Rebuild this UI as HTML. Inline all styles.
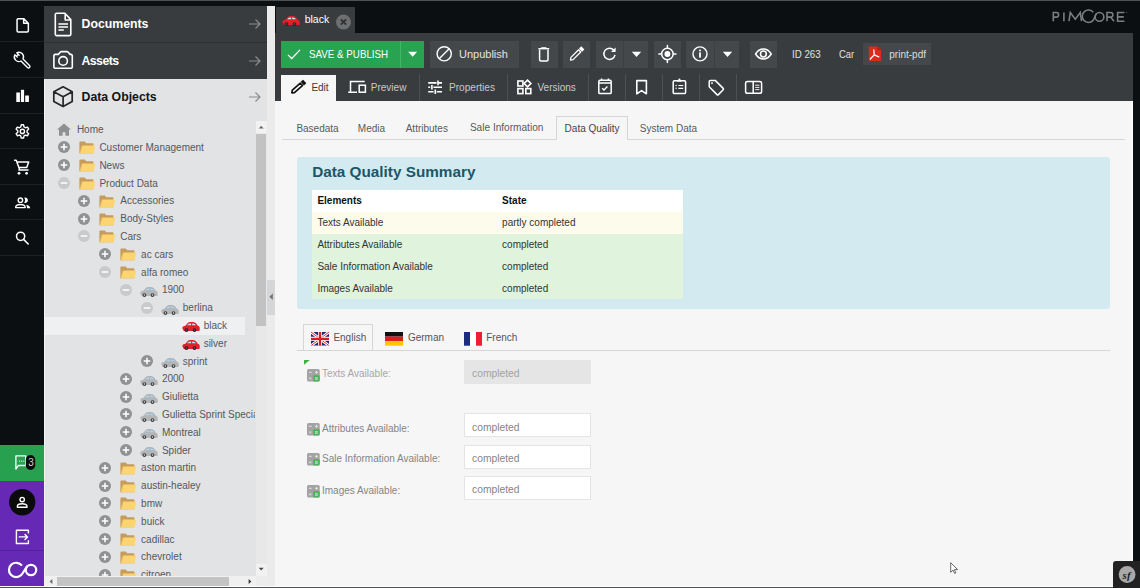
<!DOCTYPE html>
<html><head><meta charset="utf-8">
<style>
*{margin:0;padding:0;box-sizing:border-box}
html,body{width:1140px;height:588px;overflow:hidden;background:#0c0f12;font-family:"Liberation Sans",sans-serif;position:relative}
.a{position:absolute}
.t{position:absolute;white-space:nowrap;line-height:1}
svg{position:absolute;overflow:visible}
</style></head><body>
<div class="a" style="left:0px;top:0px;width:1140px;height:1px;background:#4f5154;"></div>
<div class="a" style="left:0px;top:41px;width:44px;height:1px;background:#1d2024;"></div>
<div class="a" style="left:0px;top:77px;width:44px;height:1px;background:#1d2024;"></div>
<div class="a" style="left:0px;top:113px;width:44px;height:1px;background:#1d2024;"></div>
<div class="a" style="left:0px;top:148px;width:44px;height:1px;background:#1d2024;"></div>
<div class="a" style="left:0px;top:184px;width:44px;height:1px;background:#1d2024;"></div>
<div class="a" style="left:0px;top:219px;width:44px;height:1px;background:#1d2024;"></div>
<div class="a" style="left:0px;top:255px;width:44px;height:1px;background:#1d2024;"></div>
<div class="a" style="left:0px;top:445px;width:44px;height:36px;background:#27a04f;"></div>
<div class="a" style="left:0px;top:481px;width:44px;height:107px;background:#6529b6;"></div>
<div class="a" style="left:0px;top:550px;width:44px;height:1px;background:#5422a0;"></div>
<svg style="left:0px;top:0px;" width="44" height="40" viewBox="0 0 44 40"><path d="M17.05 19.85 a1.2 1.2 0 0 1 1.2-1.2 h5.4 l4.7 4.6 v7.5 a1.2 1.2 0 0 1-1.2 1.2 h-8.9 a1.2 1.2 0 0 1-1.2-1.2z M23.65 18.65 v4.6 h4.7" fill="none" stroke="#fff" stroke-width="1.5" stroke-linejoin="round"/></svg>
<svg style="left:0px;top:40px;" width="44" height="36" viewBox="0 0 44 36"><g transform="translate(18.9 16.9) rotate(45)"><path d="M4.37 -1.45 L13.55 -1.45 A1.45 1.45 0 0 1 13.55 1.45 L4.37 1.45 A4.6 4.6 0 0 1 -4.40 1.35 L-1.0 1.35 A1.35 1.35 0 0 1 -1.0 -1.35 L-4.40 -1.35 A4.6 4.6 0 0 1 4.37 -1.45 Z" fill="none" stroke="#fff" stroke-width="1.35" stroke-linejoin="round"/></g></svg>
<svg style="left:0px;top:76px;" width="44" height="36" viewBox="0 0 44 36"><rect x="16.3" y="16.5" width="3.6" height="9.5" fill="#fff"/><rect x="20.9" y="13.8" width="3.2" height="12.2" fill="#fff"/><rect x="25.2" y="19.5" width="3.7" height="6.5" fill="#fff"/></svg>
<svg style="left:0px;top:119px;" width="44" height="24" viewBox="0 0 44 24"><path d="M20.72 8.01 L21.24 5.80 L23.56 5.80 L24.08 8.01 L25.36 8.75 L27.53 8.09 L28.70 10.11 L27.04 11.66 L27.04 13.14 L28.70 14.69 L27.53 16.71 L25.36 16.05 L24.08 16.79 L23.56 19.00 L21.24 19.00 L20.72 16.79 L19.44 16.05 L17.27 16.71 L16.10 14.69 L17.76 13.14 L17.76 11.66 L16.10 10.11 L17.27 8.09 L19.44 8.75Z" fill="none" stroke="#fff" stroke-width="1.4" stroke-linejoin="round"/><circle cx="22.4" cy="12.4" r="2.1" fill="none" stroke="#fff" stroke-width="1.4"/></svg>
<svg style="left:0px;top:155px;" width="44" height="24" viewBox="0 0 44 24"><path d="M14.6 5.3 h1.6 l3.6 9.6 h8.2 M17.2 7 h11.5 l-2 5.5 h-7.6 M19.8 14.9 l-1 0 v-0 " fill="none" stroke="#fff" stroke-width="1.5" stroke-linejoin="round" stroke-linecap="round"/><circle cx="19" cy="18.3" r="1.4" fill="#fff"/><circle cx="26.6" cy="18.3" r="1.4" fill="#fff"/></svg>
<svg style="left:0px;top:190px;" width="44" height="24" viewBox="0 0 44 24"><circle cx="20.4" cy="10.2" r="2.2" fill="none" stroke="#fff" stroke-width="1.4"/><path d="M15.6 17.6 c0-2.1 2.2-3.1 4.8-3.1 s4.8 1 4.8 3.1z" fill="none" stroke="#fff" stroke-width="1.4" stroke-linejoin="round"/><path d="M24.2 7.8 a2.7 2.7 0 1 1 0 5 c0.6-0.7 0.9-1.5 0.9-2.5 s-0.3-1.8-0.9-2.5z" fill="#fff"/><path d="M26.2 14.8 c2.3 0.3 4 1.6 4 3.4 h-3.2 c0-1.3-0.3-2.4-0.8-3.4z" fill="#fff"/></svg>
<svg style="left:0px;top:226px;" width="44" height="24" viewBox="0 0 44 24"><circle cx="20.6" cy="10.3" r="4.1" fill="none" stroke="#fff" stroke-width="1.5"/><path d="M23.6 13.4 l4.6 4.6" stroke="#fff" stroke-width="1.6" stroke-linecap="round"/></svg>
<svg style="left:0px;top:445px;" width="44" height="36" viewBox="0 0 44 36"><path d="M15.9 10.9 h9.8 v9.6 h-7.4 l-2.4 3.6z" fill="none" stroke="#fff" stroke-width="1.3" stroke-linejoin="round"/><circle cx="19.6" cy="16.1" r="0.65" fill="#fff"/><circle cx="21.7" cy="16.1" r="0.65" fill="#fff"/><circle cx="23.8" cy="16.1" r="0.65" fill="#fff"/><rect x="25.8" y="10" width="9.4" height="15" rx="4.7" fill="#0b0b0b"/></svg>
<div class="t" style="left:28.3px;top:457.94px;font-size:10px;color:#d0d0d0;">3</div>
<svg style="left:0px;top:481px;" width="44" height="36" viewBox="0 0 44 36"><circle cx="22.2" cy="21.2" r="13.2" fill="#0b0b0b"/><circle cx="22.2" cy="18.6" r="2.2" fill="none" stroke="#fff" stroke-width="1.4"/><path d="M17.4 26.3 v-1 a4.8 2.6 0 0 1 9.6 0 v1z" fill="none" stroke="#fff" stroke-width="1.4" stroke-linejoin="round"/></svg>
<svg style="left:0px;top:520px;" width="44" height="30" viewBox="0 0 44 30"><path d="M28.4 13.5 v-3.2 h-12 v13.2 h12 v-3.2" fill="none" stroke="#fff" stroke-width="1.4" stroke-linejoin="round"/><path d="M19.2 16.9 h8.2 M25 14.4 l2.5 2.5 l-2.5 2.5" fill="none" stroke="#fff" stroke-width="1.4" stroke-linejoin="round" stroke-linecap="round"/></svg>
<svg style="left:0px;top:551px;" width="44" height="37" viewBox="0 0 44 37"><g fill="none" stroke="#fff" stroke-width="2.2"><path d="M21.9 14.6 A7.2 7.2 0 1 0 21.3 24 C23 22.2 25.6 17 27.3 15.3"/><circle cx="31" cy="19" r="5.2"/></g></svg>
<div class="a" style="left:44px;top:6px;width:223px;height:582px;background:#e2e3e5;"></div>
<div class="a" style="left:44px;top:6px;width:223px;height:35.5px;background:#393c3f;"></div>
<div class="a" style="left:44px;top:41.5px;width:223px;height:1px;background:#2e3134;"></div>
<div class="a" style="left:44px;top:42.5px;width:223px;height:36.3px;background:#393c3f;"></div>
<div class="a" style="left:44px;top:79px;width:1px;height:509px;background:#f3f3f3;"></div>
<div class="t" style="left:81.5px;top:17.99px;font-size:12.3px;color:#fff;font-weight:bold;">Documents</div>
<div class="t" style="left:81.5px;top:55.19px;font-size:12.3px;color:#fff;font-weight:bold;letter-spacing:-0.55px">Assets</div>
<div class="t" style="left:81.5px;top:90.69px;font-size:12.3px;color:#141414;font-weight:bold;">Data Objects</div>
<svg style="left:44px;top:6px;" width="30" height="36" viewBox="0 0 30 36"><path d="M11.3 8.6 a1.4 1.4 0 0 1 1.4-1.4 h8.2 l5.9 6.4 v14.6 a1.4 1.4 0 0 1-1.4 1.4 h-12.7 a1.4 1.4 0 0 1-1.4-1.4z M21.2 7.6 v6.4 h5.6" fill="none" stroke="#fff" stroke-width="1.6" stroke-linejoin="round"/><path d="M14.4 18 h9.6 M14.4 21 h9.6 M14.4 24 h5.4" stroke="#fff" stroke-width="1.6"/></svg>
<svg style="left:44px;top:42px;" width="30" height="36" viewBox="0 0 30 36"><path d="M11.3 12.4 h3 l2.1-2.4 c0.3-0.3 0.6-0.4 1-0.4 h5.6 c0.4 0 0.7 0.1 1 0.4 l2.1 2.4 h0.8 a1.4 1.4 0 0 1 1.4 1.4 v11.1 a1.4 1.4 0 0 1-1.4 1.4 h-15.6 a1.4 1.4 0 0 1-1.4-1.4 v-11.1 a1.4 1.4 0 0 1 1.4-1.4z" fill="none" stroke="#fff" stroke-width="1.6" stroke-linejoin="round"/><circle cx="19.1" cy="18.9" r="4.3" fill="none" stroke="#fff" stroke-width="1.6"/></svg>
<svg style="left:44px;top:79px;" width="30" height="36" viewBox="0 0 30 36"><path d="M19.1 7.8 l9.1 4.9 v9.9 l-9.1 5 l-9.3-5 v-9.9z M9.8 12.7 l9.3 5 l9.1-5 M19.1 17.7 v10" fill="none" stroke="#262626" stroke-width="1.7" stroke-linejoin="round"/></svg>
<svg style="left:244px;top:18px;" width="20" height="12" viewBox="0 0 20 12"><path d="M5 6 h11 M11.5 1.5 l4.5 4.5 l-4.5 4.5" fill="none" stroke="#8a8c8e" stroke-width="1.2"/></svg>
<svg style="left:244px;top:54.5px;" width="20" height="12" viewBox="0 0 20 12"><path d="M5 6 h11 M11.5 1.5 l4.5 4.5 l-4.5 4.5" fill="none" stroke="#8a8c8e" stroke-width="1.2"/></svg>
<svg style="left:244px;top:91px;" width="20" height="12" viewBox="0 0 20 12"><path d="M5 6 h11 M11.5 1.5 l4.5 4.5 l-4.5 4.5" fill="none" stroke="#8a8c8e" stroke-width="1.2"/></svg>
<div class="a" style="left:45px;top:115px;width:209.5px;height:461px;overflow:hidden">
<div class="a" style="left:0px;top:202.10000000000002px;width:200px;height:17.9px;background:#eff0f2;"></div>
<svg style="left:12px;top:7.899999999999995px;" width="15" height="13" viewBox="0 0 15 13"><path d="M7 0.4 l7 6.2 h-2 v6.2 h-3.6 v-3.6 h-2.8 v3.6 h-3.6 v-6.2 h-2z" fill="#8e9092"/></svg>
<div class="t" style="left:31.900000000000006px;top:10.10px;font-size:10px;color:#53585e;">Home</div>
<svg style="left:12.600000000000001px;top:26.400000000000006px;" width="12" height="12" viewBox="0 0 12 12"><circle cx="6" cy="6" r="6" fill="#8f9193"/><path d="M2.7 6 h6.6 M6 2.7 v6.6" stroke="#fff" stroke-width="1.5"/></svg>
<svg style="left:33.5px;top:26.400000000000006px;" width="17" height="13" viewBox="0 0 17 13"><path d="M0.4 1.4 a0.8 0.8 0 0 1 0.8-0.8 h4.6 l1.4 1.6 h6.4 a0.8 0.8 0 0 1 0.8 0.8 v9.2 h-14z" fill="#c69c5d"/><path d="M3 4.4 h12.6 a0.6 0.6 0 0 1 0.6 0.7 l-1.6 7.1 h-14.2 z" fill="#fcd571"/><path d="M2.2 4.4 h1.4 l-2.2 7.8 h-1z" fill="#d9ae62" opacity="0.6"/></svg>
<div class="t" style="left:54.4px;top:27.91px;font-size:10px;color:#53585e;">Customer Management</div>
<svg style="left:12.600000000000001px;top:44.19999999999999px;" width="12" height="12" viewBox="0 0 12 12"><circle cx="6" cy="6" r="6" fill="#8f9193"/><path d="M2.7 6 h6.6 M6 2.7 v6.6" stroke="#fff" stroke-width="1.5"/></svg>
<svg style="left:33.5px;top:44.19999999999999px;" width="17" height="13" viewBox="0 0 17 13"><path d="M0.4 1.4 a0.8 0.8 0 0 1 0.8-0.8 h4.6 l1.4 1.6 h6.4 a0.8 0.8 0 0 1 0.8 0.8 v9.2 h-14z" fill="#c69c5d"/><path d="M3 4.4 h12.6 a0.6 0.6 0 0 1 0.6 0.7 l-1.6 7.1 h-14.2 z" fill="#fcd571"/><path d="M2.2 4.4 h1.4 l-2.2 7.8 h-1z" fill="#d9ae62" opacity="0.6"/></svg>
<div class="t" style="left:54.4px;top:45.70px;font-size:10px;color:#53585e;">News</div>
<svg style="left:12.600000000000001px;top:62.00000000000001px;" width="12" height="12" viewBox="0 0 12 12"><circle cx="6" cy="6" r="6" fill="#c9cacc"/><path d="M2.7 6 h6.6" stroke="#fff" stroke-width="1.5"/></svg>
<svg style="left:33.5px;top:62.00000000000001px;" width="17" height="13" viewBox="0 0 17 13"><path d="M0.4 1.4 a0.8 0.8 0 0 1 0.8-0.8 h4.6 l1.4 1.6 h6.4 a0.8 0.8 0 0 1 0.8 0.8 v9.2 h-14z" fill="#c69c5d"/><path d="M3 4.4 h12.6 a0.6 0.6 0 0 1 0.6 0.7 l-1.6 7.1 h-14.2 z" fill="#fcd571"/><path d="M2.2 4.4 h1.4 l-2.2 7.8 h-1z" fill="#d9ae62" opacity="0.6"/></svg>
<div class="t" style="left:54.4px;top:63.51px;font-size:10px;color:#53585e;">Product Data</div>
<svg style="left:33.45px;top:79.80000000000001px;" width="12" height="12" viewBox="0 0 12 12"><circle cx="6" cy="6" r="6" fill="#8f9193"/><path d="M2.7 6 h6.6 M6 2.7 v6.6" stroke="#fff" stroke-width="1.5"/></svg>
<svg style="left:54.35px;top:79.80000000000001px;" width="17" height="13" viewBox="0 0 17 13"><path d="M0.4 1.4 a0.8 0.8 0 0 1 0.8-0.8 h4.6 l1.4 1.6 h6.4 a0.8 0.8 0 0 1 0.8 0.8 v9.2 h-14z" fill="#c69c5d"/><path d="M3 4.4 h12.6 a0.6 0.6 0 0 1 0.6 0.7 l-1.6 7.1 h-14.2 z" fill="#fcd571"/><path d="M2.2 4.4 h1.4 l-2.2 7.8 h-1z" fill="#d9ae62" opacity="0.6"/></svg>
<div class="t" style="left:75.25px;top:81.31px;font-size:10px;color:#53585e;">Accessories</div>
<svg style="left:33.45px;top:97.6px;" width="12" height="12" viewBox="0 0 12 12"><circle cx="6" cy="6" r="6" fill="#8f9193"/><path d="M2.7 6 h6.6 M6 2.7 v6.6" stroke="#fff" stroke-width="1.5"/></svg>
<svg style="left:54.35px;top:97.6px;" width="17" height="13" viewBox="0 0 17 13"><path d="M0.4 1.4 a0.8 0.8 0 0 1 0.8-0.8 h4.6 l1.4 1.6 h6.4 a0.8 0.8 0 0 1 0.8 0.8 v9.2 h-14z" fill="#c69c5d"/><path d="M3 4.4 h12.6 a0.6 0.6 0 0 1 0.6 0.7 l-1.6 7.1 h-14.2 z" fill="#fcd571"/><path d="M2.2 4.4 h1.4 l-2.2 7.8 h-1z" fill="#d9ae62" opacity="0.6"/></svg>
<div class="t" style="left:75.25px;top:99.10px;font-size:10px;color:#53585e;">Body-Styles</div>
<svg style="left:33.45px;top:115.4px;" width="12" height="12" viewBox="0 0 12 12"><circle cx="6" cy="6" r="6" fill="#c9cacc"/><path d="M2.7 6 h6.6" stroke="#fff" stroke-width="1.5"/></svg>
<svg style="left:54.35px;top:115.4px;" width="17" height="13" viewBox="0 0 17 13"><path d="M0.4 1.4 a0.8 0.8 0 0 1 0.8-0.8 h4.6 l1.4 1.6 h6.4 a0.8 0.8 0 0 1 0.8 0.8 v9.2 h-14z" fill="#c69c5d"/><path d="M3 4.4 h12.6 a0.6 0.6 0 0 1 0.6 0.7 l-1.6 7.1 h-14.2 z" fill="#fcd571"/><path d="M2.2 4.4 h1.4 l-2.2 7.8 h-1z" fill="#d9ae62" opacity="0.6"/></svg>
<div class="t" style="left:75.25px;top:116.91px;font-size:10px;color:#53585e;">Cars</div>
<svg style="left:54.30000000000001px;top:133.2px;" width="12" height="12" viewBox="0 0 12 12"><circle cx="6" cy="6" r="6" fill="#8f9193"/><path d="M2.7 6 h6.6 M6 2.7 v6.6" stroke="#fff" stroke-width="1.5"/></svg>
<svg style="left:75.20000000000002px;top:133.2px;" width="17" height="13" viewBox="0 0 17 13"><path d="M0.4 1.4 a0.8 0.8 0 0 1 0.8-0.8 h4.6 l1.4 1.6 h6.4 a0.8 0.8 0 0 1 0.8 0.8 v9.2 h-14z" fill="#c69c5d"/><path d="M3 4.4 h12.6 a0.6 0.6 0 0 1 0.6 0.7 l-1.6 7.1 h-14.2 z" fill="#fcd571"/><path d="M2.2 4.4 h1.4 l-2.2 7.8 h-1z" fill="#d9ae62" opacity="0.6"/></svg>
<div class="t" style="left:96.10000000000001px;top:134.70px;font-size:10px;color:#53585e;">ac cars</div>
<svg style="left:54.30000000000001px;top:151.0px;" width="12" height="12" viewBox="0 0 12 12"><circle cx="6" cy="6" r="6" fill="#c9cacc"/><path d="M2.7 6 h6.6" stroke="#fff" stroke-width="1.5"/></svg>
<svg style="left:75.20000000000002px;top:151.0px;" width="17" height="13" viewBox="0 0 17 13"><path d="M0.4 1.4 a0.8 0.8 0 0 1 0.8-0.8 h4.6 l1.4 1.6 h6.4 a0.8 0.8 0 0 1 0.8 0.8 v9.2 h-14z" fill="#c69c5d"/><path d="M3 4.4 h12.6 a0.6 0.6 0 0 1 0.6 0.7 l-1.6 7.1 h-14.2 z" fill="#fcd571"/><path d="M2.2 4.4 h1.4 l-2.2 7.8 h-1z" fill="#d9ae62" opacity="0.6"/></svg>
<div class="t" style="left:96.10000000000001px;top:152.50px;font-size:10px;color:#53585e;">alfa romeo</div>
<svg style="left:75.15px;top:168.8px;" width="12" height="12" viewBox="0 0 12 12"><circle cx="6" cy="6" r="6" fill="#c9cacc"/><path d="M2.7 6 h6.6" stroke="#fff" stroke-width="1.5"/></svg>
<svg style="left:94.85000000000001px;top:171.9px;" width="18" height="11" viewBox="0 0 18 11"><path d="M0.3 6.2 c0-1.3 0.8-2 2-2.3 l1.5-0.4 c1-1.6 2.3-3.5 4.6-3.5 h2.4 c2.2 0 3.7 1.6 4.7 3.4 c1.6 0.4 2.2 1.2 2.2 2.6 v2 c0 0.6-0.4 1-1 1 h-14.4 c-0.6 0-1-0.4-1-1z" fill="#b3b5b7"/><path d="M5.3 3.3 c0.7-1.2 1.6-1.9 2.9-1.9 h0.9 v1.9z M10.2 1.4 h0.7 c1.3 0 2.3 0.7 3 1.9 h-3.7z" fill="#a9d5f2"/><circle cx="4.4" cy="8.1" r="1.9" fill="#3a3c3e"/><circle cx="12.5" cy="8.1" r="1.9" fill="#3a3c3e"/><circle cx="4.4" cy="8.1" r="0.75" fill="#f0f0f0"/><circle cx="12.5" cy="8.1" r="0.75" fill="#f0f0f0"/></svg>
<div class="t" style="left:116.95px;top:170.31px;font-size:10px;color:#53585e;">1900</div>
<svg style="left:96.0px;top:186.60000000000002px;" width="12" height="12" viewBox="0 0 12 12"><circle cx="6" cy="6" r="6" fill="#c9cacc"/><path d="M2.7 6 h6.6" stroke="#fff" stroke-width="1.5"/></svg>
<svg style="left:115.7px;top:189.70000000000002px;" width="18" height="11" viewBox="0 0 18 11"><path d="M0.3 6.2 c0-1.3 0.8-2 2-2.3 l1.5-0.4 c1-1.6 2.3-3.5 4.6-3.5 h2.4 c2.2 0 3.7 1.6 4.7 3.4 c1.6 0.4 2.2 1.2 2.2 2.6 v2 c0 0.6-0.4 1-1 1 h-14.4 c-0.6 0-1-0.4-1-1z" fill="#b3b5b7"/><path d="M5.3 3.3 c0.7-1.2 1.6-1.9 2.9-1.9 h0.9 v1.9z M10.2 1.4 h0.7 c1.3 0 2.3 0.7 3 1.9 h-3.7z" fill="#a9d5f2"/><circle cx="4.4" cy="8.1" r="1.9" fill="#3a3c3e"/><circle cx="12.5" cy="8.1" r="1.9" fill="#3a3c3e"/><circle cx="4.4" cy="8.1" r="0.75" fill="#f0f0f0"/><circle cx="12.5" cy="8.1" r="0.75" fill="#f0f0f0"/></svg>
<div class="t" style="left:137.8px;top:188.11px;font-size:10px;color:#53585e;">berlina</div>
<svg style="left:136.55px;top:207.29999999999998px;" width="18" height="11" viewBox="0 0 18 11"><path d="M0.3 6.2 c0-1.3 0.8-2 2-2.3 l1.5-0.4 c1-1.6 2.3-3.5 4.6-3.5 h2.4 c2.2 0 3.7 1.6 4.7 3.4 c1.6 0.4 2.2 1.2 2.2 2.6 v2 c0 0.6-0.4 1-1 1 h-14.4 c-0.6 0-1-0.4-1-1z" fill="#e0202a"/><path d="M5.3 3.3 c0.7-1.2 1.6-1.9 2.9-1.9 h0.9 v1.9z M10.2 1.4 h0.7 c1.3 0 2.3 0.7 3 1.9 h-3.7z" fill="#c4e6f6"/><circle cx="4.4" cy="8.1" r="1.9" fill="#222"/><circle cx="12.5" cy="8.1" r="1.9" fill="#222"/><circle cx="4.4" cy="8.1" r="0.75" fill="#666"/><circle cx="12.5" cy="8.1" r="0.75" fill="#666"/></svg>
<div class="t" style="left:158.64999999999998px;top:205.90px;font-size:10px;color:#53585e;">black</div>
<svg style="left:136.55px;top:225.10000000000005px;" width="18" height="11" viewBox="0 0 18 11"><path d="M0.3 6.2 c0-1.3 0.8-2 2-2.3 l1.5-0.4 c1-1.6 2.3-3.5 4.6-3.5 h2.4 c2.2 0 3.7 1.6 4.7 3.4 c1.6 0.4 2.2 1.2 2.2 2.6 v2 c0 0.6-0.4 1-1 1 h-14.4 c-0.6 0-1-0.4-1-1z" fill="#e0202a"/><path d="M5.3 3.3 c0.7-1.2 1.6-1.9 2.9-1.9 h0.9 v1.9z M10.2 1.4 h0.7 c1.3 0 2.3 0.7 3 1.9 h-3.7z" fill="#c4e6f6"/><circle cx="4.4" cy="8.1" r="1.9" fill="#222"/><circle cx="12.5" cy="8.1" r="1.9" fill="#222"/><circle cx="4.4" cy="8.1" r="0.75" fill="#666"/><circle cx="12.5" cy="8.1" r="0.75" fill="#666"/></svg>
<div class="t" style="left:158.64999999999998px;top:223.71px;font-size:10px;color:#53585e;">silver</div>
<svg style="left:96.0px;top:240.0px;" width="12" height="12" viewBox="0 0 12 12"><circle cx="6" cy="6" r="6" fill="#8f9193"/><path d="M2.7 6 h6.6 M6 2.7 v6.6" stroke="#fff" stroke-width="1.5"/></svg>
<svg style="left:115.7px;top:243.1px;" width="18" height="11" viewBox="0 0 18 11"><path d="M0.3 6.2 c0-1.3 0.8-2 2-2.3 l1.5-0.4 c1-1.6 2.3-3.5 4.6-3.5 h2.4 c2.2 0 3.7 1.6 4.7 3.4 c1.6 0.4 2.2 1.2 2.2 2.6 v2 c0 0.6-0.4 1-1 1 h-14.4 c-0.6 0-1-0.4-1-1z" fill="#b3b5b7"/><path d="M5.3 3.3 c0.7-1.2 1.6-1.9 2.9-1.9 h0.9 v1.9z M10.2 1.4 h0.7 c1.3 0 2.3 0.7 3 1.9 h-3.7z" fill="#a9d5f2"/><circle cx="4.4" cy="8.1" r="1.9" fill="#3a3c3e"/><circle cx="12.5" cy="8.1" r="1.9" fill="#3a3c3e"/><circle cx="4.4" cy="8.1" r="0.75" fill="#f0f0f0"/><circle cx="12.5" cy="8.1" r="0.75" fill="#f0f0f0"/></svg>
<div class="t" style="left:137.8px;top:241.50px;font-size:10px;color:#53585e;">sprint</div>
<svg style="left:75.15px;top:257.8px;" width="12" height="12" viewBox="0 0 12 12"><circle cx="6" cy="6" r="6" fill="#8f9193"/><path d="M2.7 6 h6.6 M6 2.7 v6.6" stroke="#fff" stroke-width="1.5"/></svg>
<svg style="left:94.85000000000001px;top:260.9px;" width="18" height="11" viewBox="0 0 18 11"><path d="M0.3 6.2 c0-1.3 0.8-2 2-2.3 l1.5-0.4 c1-1.6 2.3-3.5 4.6-3.5 h2.4 c2.2 0 3.7 1.6 4.7 3.4 c1.6 0.4 2.2 1.2 2.2 2.6 v2 c0 0.6-0.4 1-1 1 h-14.4 c-0.6 0-1-0.4-1-1z" fill="#b3b5b7"/><path d="M5.3 3.3 c0.7-1.2 1.6-1.9 2.9-1.9 h0.9 v1.9z M10.2 1.4 h0.7 c1.3 0 2.3 0.7 3 1.9 h-3.7z" fill="#a9d5f2"/><circle cx="4.4" cy="8.1" r="1.9" fill="#3a3c3e"/><circle cx="12.5" cy="8.1" r="1.9" fill="#3a3c3e"/><circle cx="4.4" cy="8.1" r="0.75" fill="#f0f0f0"/><circle cx="12.5" cy="8.1" r="0.75" fill="#f0f0f0"/></svg>
<div class="t" style="left:116.95px;top:259.31px;font-size:10px;color:#53585e;">2000</div>
<svg style="left:75.15px;top:275.6px;" width="12" height="12" viewBox="0 0 12 12"><circle cx="6" cy="6" r="6" fill="#8f9193"/><path d="M2.7 6 h6.6 M6 2.7 v6.6" stroke="#fff" stroke-width="1.5"/></svg>
<svg style="left:94.85000000000001px;top:278.7px;" width="18" height="11" viewBox="0 0 18 11"><path d="M0.3 6.2 c0-1.3 0.8-2 2-2.3 l1.5-0.4 c1-1.6 2.3-3.5 4.6-3.5 h2.4 c2.2 0 3.7 1.6 4.7 3.4 c1.6 0.4 2.2 1.2 2.2 2.6 v2 c0 0.6-0.4 1-1 1 h-14.4 c-0.6 0-1-0.4-1-1z" fill="#b3b5b7"/><path d="M5.3 3.3 c0.7-1.2 1.6-1.9 2.9-1.9 h0.9 v1.9z M10.2 1.4 h0.7 c1.3 0 2.3 0.7 3 1.9 h-3.7z" fill="#a9d5f2"/><circle cx="4.4" cy="8.1" r="1.9" fill="#3a3c3e"/><circle cx="12.5" cy="8.1" r="1.9" fill="#3a3c3e"/><circle cx="4.4" cy="8.1" r="0.75" fill="#f0f0f0"/><circle cx="12.5" cy="8.1" r="0.75" fill="#f0f0f0"/></svg>
<div class="t" style="left:116.95px;top:277.11px;font-size:10px;color:#53585e;">Giulietta</div>
<svg style="left:75.15px;top:293.4px;" width="12" height="12" viewBox="0 0 12 12"><circle cx="6" cy="6" r="6" fill="#8f9193"/><path d="M2.7 6 h6.6 M6 2.7 v6.6" stroke="#fff" stroke-width="1.5"/></svg>
<svg style="left:94.85000000000001px;top:296.49999999999994px;" width="18" height="11" viewBox="0 0 18 11"><path d="M0.3 6.2 c0-1.3 0.8-2 2-2.3 l1.5-0.4 c1-1.6 2.3-3.5 4.6-3.5 h2.4 c2.2 0 3.7 1.6 4.7 3.4 c1.6 0.4 2.2 1.2 2.2 2.6 v2 c0 0.6-0.4 1-1 1 h-14.4 c-0.6 0-1-0.4-1-1z" fill="#b3b5b7"/><path d="M5.3 3.3 c0.7-1.2 1.6-1.9 2.9-1.9 h0.9 v1.9z M10.2 1.4 h0.7 c1.3 0 2.3 0.7 3 1.9 h-3.7z" fill="#a9d5f2"/><circle cx="4.4" cy="8.1" r="1.9" fill="#3a3c3e"/><circle cx="12.5" cy="8.1" r="1.9" fill="#3a3c3e"/><circle cx="4.4" cy="8.1" r="0.75" fill="#f0f0f0"/><circle cx="12.5" cy="8.1" r="0.75" fill="#f0f0f0"/></svg>
<div class="t" style="left:116.95px;top:294.91px;font-size:10px;color:#53585e;">Gulietta Sprint Speciale</div>
<svg style="left:75.15px;top:311.20000000000005px;" width="12" height="12" viewBox="0 0 12 12"><circle cx="6" cy="6" r="6" fill="#8f9193"/><path d="M2.7 6 h6.6 M6 2.7 v6.6" stroke="#fff" stroke-width="1.5"/></svg>
<svg style="left:94.85000000000001px;top:314.3px;" width="18" height="11" viewBox="0 0 18 11"><path d="M0.3 6.2 c0-1.3 0.8-2 2-2.3 l1.5-0.4 c1-1.6 2.3-3.5 4.6-3.5 h2.4 c2.2 0 3.7 1.6 4.7 3.4 c1.6 0.4 2.2 1.2 2.2 2.6 v2 c0 0.6-0.4 1-1 1 h-14.4 c-0.6 0-1-0.4-1-1z" fill="#b3b5b7"/><path d="M5.3 3.3 c0.7-1.2 1.6-1.9 2.9-1.9 h0.9 v1.9z M10.2 1.4 h0.7 c1.3 0 2.3 0.7 3 1.9 h-3.7z" fill="#a9d5f2"/><circle cx="4.4" cy="8.1" r="1.9" fill="#3a3c3e"/><circle cx="12.5" cy="8.1" r="1.9" fill="#3a3c3e"/><circle cx="4.4" cy="8.1" r="0.75" fill="#f0f0f0"/><circle cx="12.5" cy="8.1" r="0.75" fill="#f0f0f0"/></svg>
<div class="t" style="left:116.95px;top:312.71px;font-size:10px;color:#53585e;">Montreal</div>
<svg style="left:75.15px;top:329.0px;" width="12" height="12" viewBox="0 0 12 12"><circle cx="6" cy="6" r="6" fill="#8f9193"/><path d="M2.7 6 h6.6 M6 2.7 v6.6" stroke="#fff" stroke-width="1.5"/></svg>
<svg style="left:94.85000000000001px;top:332.09999999999997px;" width="18" height="11" viewBox="0 0 18 11"><path d="M0.3 6.2 c0-1.3 0.8-2 2-2.3 l1.5-0.4 c1-1.6 2.3-3.5 4.6-3.5 h2.4 c2.2 0 3.7 1.6 4.7 3.4 c1.6 0.4 2.2 1.2 2.2 2.6 v2 c0 0.6-0.4 1-1 1 h-14.4 c-0.6 0-1-0.4-1-1z" fill="#b3b5b7"/><path d="M5.3 3.3 c0.7-1.2 1.6-1.9 2.9-1.9 h0.9 v1.9z M10.2 1.4 h0.7 c1.3 0 2.3 0.7 3 1.9 h-3.7z" fill="#a9d5f2"/><circle cx="4.4" cy="8.1" r="1.9" fill="#3a3c3e"/><circle cx="12.5" cy="8.1" r="1.9" fill="#3a3c3e"/><circle cx="4.4" cy="8.1" r="0.75" fill="#f0f0f0"/><circle cx="12.5" cy="8.1" r="0.75" fill="#f0f0f0"/></svg>
<div class="t" style="left:116.95px;top:330.51px;font-size:10px;color:#53585e;">Spider</div>
<svg style="left:54.30000000000001px;top:346.79999999999995px;" width="12" height="12" viewBox="0 0 12 12"><circle cx="6" cy="6" r="6" fill="#8f9193"/><path d="M2.7 6 h6.6 M6 2.7 v6.6" stroke="#fff" stroke-width="1.5"/></svg>
<svg style="left:75.20000000000002px;top:346.79999999999995px;" width="17" height="13" viewBox="0 0 17 13"><path d="M0.4 1.4 a0.8 0.8 0 0 1 0.8-0.8 h4.6 l1.4 1.6 h6.4 a0.8 0.8 0 0 1 0.8 0.8 v9.2 h-14z" fill="#c69c5d"/><path d="M3 4.4 h12.6 a0.6 0.6 0 0 1 0.6 0.7 l-1.6 7.1 h-14.2 z" fill="#fcd571"/><path d="M2.2 4.4 h1.4 l-2.2 7.8 h-1z" fill="#d9ae62" opacity="0.6"/></svg>
<div class="t" style="left:96.10000000000001px;top:348.31px;font-size:10px;color:#53585e;">aston martin</div>
<svg style="left:54.30000000000001px;top:364.6px;" width="12" height="12" viewBox="0 0 12 12"><circle cx="6" cy="6" r="6" fill="#8f9193"/><path d="M2.7 6 h6.6 M6 2.7 v6.6" stroke="#fff" stroke-width="1.5"/></svg>
<svg style="left:75.20000000000002px;top:364.6px;" width="17" height="13" viewBox="0 0 17 13"><path d="M0.4 1.4 a0.8 0.8 0 0 1 0.8-0.8 h4.6 l1.4 1.6 h6.4 a0.8 0.8 0 0 1 0.8 0.8 v9.2 h-14z" fill="#c69c5d"/><path d="M3 4.4 h12.6 a0.6 0.6 0 0 1 0.6 0.7 l-1.6 7.1 h-14.2 z" fill="#fcd571"/><path d="M2.2 4.4 h1.4 l-2.2 7.8 h-1z" fill="#d9ae62" opacity="0.6"/></svg>
<div class="t" style="left:96.10000000000001px;top:366.11px;font-size:10px;color:#53585e;">austin-healey</div>
<svg style="left:54.30000000000001px;top:382.4px;" width="12" height="12" viewBox="0 0 12 12"><circle cx="6" cy="6" r="6" fill="#8f9193"/><path d="M2.7 6 h6.6 M6 2.7 v6.6" stroke="#fff" stroke-width="1.5"/></svg>
<svg style="left:75.20000000000002px;top:382.4px;" width="17" height="13" viewBox="0 0 17 13"><path d="M0.4 1.4 a0.8 0.8 0 0 1 0.8-0.8 h4.6 l1.4 1.6 h6.4 a0.8 0.8 0 0 1 0.8 0.8 v9.2 h-14z" fill="#c69c5d"/><path d="M3 4.4 h12.6 a0.6 0.6 0 0 1 0.6 0.7 l-1.6 7.1 h-14.2 z" fill="#fcd571"/><path d="M2.2 4.4 h1.4 l-2.2 7.8 h-1z" fill="#d9ae62" opacity="0.6"/></svg>
<div class="t" style="left:96.10000000000001px;top:383.91px;font-size:10px;color:#53585e;">bmw</div>
<svg style="left:54.30000000000001px;top:400.20000000000005px;" width="12" height="12" viewBox="0 0 12 12"><circle cx="6" cy="6" r="6" fill="#8f9193"/><path d="M2.7 6 h6.6 M6 2.7 v6.6" stroke="#fff" stroke-width="1.5"/></svg>
<svg style="left:75.20000000000002px;top:400.20000000000005px;" width="17" height="13" viewBox="0 0 17 13"><path d="M0.4 1.4 a0.8 0.8 0 0 1 0.8-0.8 h4.6 l1.4 1.6 h6.4 a0.8 0.8 0 0 1 0.8 0.8 v9.2 h-14z" fill="#c69c5d"/><path d="M3 4.4 h12.6 a0.6 0.6 0 0 1 0.6 0.7 l-1.6 7.1 h-14.2 z" fill="#fcd571"/><path d="M2.2 4.4 h1.4 l-2.2 7.8 h-1z" fill="#d9ae62" opacity="0.6"/></svg>
<div class="t" style="left:96.10000000000001px;top:401.71px;font-size:10px;color:#53585e;">buick</div>
<svg style="left:54.30000000000001px;top:418.0px;" width="12" height="12" viewBox="0 0 12 12"><circle cx="6" cy="6" r="6" fill="#8f9193"/><path d="M2.7 6 h6.6 M6 2.7 v6.6" stroke="#fff" stroke-width="1.5"/></svg>
<svg style="left:75.20000000000002px;top:418.0px;" width="17" height="13" viewBox="0 0 17 13"><path d="M0.4 1.4 a0.8 0.8 0 0 1 0.8-0.8 h4.6 l1.4 1.6 h6.4 a0.8 0.8 0 0 1 0.8 0.8 v9.2 h-14z" fill="#c69c5d"/><path d="M3 4.4 h12.6 a0.6 0.6 0 0 1 0.6 0.7 l-1.6 7.1 h-14.2 z" fill="#fcd571"/><path d="M2.2 4.4 h1.4 l-2.2 7.8 h-1z" fill="#d9ae62" opacity="0.6"/></svg>
<div class="t" style="left:96.10000000000001px;top:419.51px;font-size:10px;color:#53585e;">cadillac</div>
<svg style="left:54.30000000000001px;top:435.80000000000007px;" width="12" height="12" viewBox="0 0 12 12"><circle cx="6" cy="6" r="6" fill="#8f9193"/><path d="M2.7 6 h6.6 M6 2.7 v6.6" stroke="#fff" stroke-width="1.5"/></svg>
<svg style="left:75.20000000000002px;top:435.80000000000007px;" width="17" height="13" viewBox="0 0 17 13"><path d="M0.4 1.4 a0.8 0.8 0 0 1 0.8-0.8 h4.6 l1.4 1.6 h6.4 a0.8 0.8 0 0 1 0.8 0.8 v9.2 h-14z" fill="#c69c5d"/><path d="M3 4.4 h12.6 a0.6 0.6 0 0 1 0.6 0.7 l-1.6 7.1 h-14.2 z" fill="#fcd571"/><path d="M2.2 4.4 h1.4 l-2.2 7.8 h-1z" fill="#d9ae62" opacity="0.6"/></svg>
<div class="t" style="left:96.10000000000001px;top:437.31px;font-size:10px;color:#53585e;">chevrolet</div>
<svg style="left:54.30000000000001px;top:453.6px;" width="12" height="12" viewBox="0 0 12 12"><circle cx="6" cy="6" r="6" fill="#8f9193"/><path d="M2.7 6 h6.6 M6 2.7 v6.6" stroke="#fff" stroke-width="1.5"/></svg>
<svg style="left:75.20000000000002px;top:453.6px;" width="17" height="13" viewBox="0 0 17 13"><path d="M0.4 1.4 a0.8 0.8 0 0 1 0.8-0.8 h4.6 l1.4 1.6 h6.4 a0.8 0.8 0 0 1 0.8 0.8 v9.2 h-14z" fill="#c69c5d"/><path d="M3 4.4 h12.6 a0.6 0.6 0 0 1 0.6 0.7 l-1.6 7.1 h-14.2 z" fill="#fcd571"/><path d="M2.2 4.4 h1.4 l-2.2 7.8 h-1z" fill="#d9ae62" opacity="0.6"/></svg>
<div class="t" style="left:96.10000000000001px;top:455.11px;font-size:10px;color:#53585e;">citroen</div>
</div>
<div class="a" style="left:256px;top:120.7px;width:10.5px;height:455.3px;background:#e8e8e9;"></div>
<div class="a" style="left:256px;top:120.7px;width:10.5px;height:12px;background:#f2f2f2;"></div>
<svg style="left:256px;top:120.7px;" width="11" height="12" viewBox="0 0 11 12"><path d="M2.7 7.6 h5 l-2.5-2.8z" fill="#6b6b6b"/></svg>
<div class="a" style="left:256.3px;top:133.5px;width:9.8px;height:192.5px;background:#c2c2c2;"></div>
<div class="a" style="left:256px;top:563.5px;width:10.5px;height:12.5px;background:#f2f2f2;"></div>
<svg style="left:256px;top:563px;" width="11" height="12" viewBox="0 0 11 12"><path d="M2.7 4.8 h5 l-2.5 2.8z" fill="#4a4a4a"/></svg>
<div class="a" style="left:45px;top:576px;width:211px;height:11px;background:#f0f0f0;"></div>
<div class="a" style="left:57px;top:576.8px;width:172px;height:9.6px;background:#c4c4c4;"></div>
<svg style="left:45px;top:576px;" width="12" height="11" viewBox="0 0 12 11"><path d="M7.4 3 v5 l-2.8-2.5z" fill="#6b6b6b"/></svg>
<svg style="left:244px;top:576px;" width="12" height="11" viewBox="0 0 12 11"><path d="M4.6 3 v5 l2.8-2.5z" fill="#333"/></svg>
<div class="a" style="left:256px;top:576px;width:11px;height:11px;background:#ececec;"></div>
<div class="a" style="left:0px;top:587px;width:1140px;height:1px;background:#4d4f52;"></div>
<div class="a" style="left:267px;top:6px;width:8px;height:582px;background:#ebebeb;"></div>
<div class="a" style="left:267px;top:279.7px;width:8px;height:35.2px;background:#d5d6d8;"></div>
<svg style="left:267px;top:290px;" width="8" height="14" viewBox="0 0 8 14"><path d="M5.8 3.6 v6.4 l-3.4-3.2z" fill="#6f7173"/></svg>
<div class="a" style="left:276px;top:6.5px;width:79px;height:26px;background:#393c3f;"></div>
<div class="a" style="left:275px;top:32.5px;width:858px;height:68.5px;background:#393c3f;"></div>
<div class="a" style="left:275px;top:101px;width:858px;height:487px;background:#f6f6f6;"></div>
<div class="a" style="left:1132px;top:101px;width:1px;height:486px;background:#ffffff;"></div>
<svg style="left:282.1px;top:16.3px;" width="18" height="11" viewBox="0 0 18 11"><path d="M0.3 6.2 c0-1.3 0.8-2 2-2.3 l1.5-0.4 c1-1.6 2.3-3.5 4.6-3.5 h2.4 c2.2 0 3.7 1.6 4.7 3.4 c1.6 0.4 2.2 1.2 2.2 2.6 v2 c0 0.6-0.4 1-1 1 h-14.4 c-0.6 0-1-0.4-1-1z" fill="#e0202a"/><path d="M5.3 3.3 c0.7-1.2 1.6-1.9 2.9-1.9 h0.9 v1.9z M10.2 1.4 h0.7 c1.3 0 2.3 0.7 3 1.9 h-3.7z" fill="#c4e6f6"/><circle cx="4.4" cy="8.1" r="1.9" fill="#222"/><circle cx="12.5" cy="8.1" r="1.9" fill="#222"/><circle cx="4.4" cy="8.1" r="0.75" fill="#666"/><circle cx="12.5" cy="8.1" r="0.75" fill="#666"/></svg>
<div class="t" style="left:304.7px;top:14.31px;font-size:10.5px;color:#ffffff;">black</div>
<svg style="left:334.8px;top:12.5px;" width="18" height="18" viewBox="0 0 18 18"><circle cx="8.5" cy="9" r="7.5" fill="#6e6f70"/><path d="M5.8 6.3 l5.4 5.4 M11.2 6.3 l-5.4 5.4" stroke="#2f3133" stroke-width="1.8"/></svg>
<svg style="left:1045px;top:5px;" width="90" height="25" viewBox="0 0 90 25"><g fill="none" stroke="#7c7d7e" stroke-width="1.6"><path d="M8.3 16.2 V7.5 H11.3 a2.3 2.3 0 0 1 0 4.6 H8.3"/><path d="M18.9 7.5 V16.2"/><path d="M24 16.2 L25.3 7.5 L30.3 14.2 L35.3 7.5 L36.5 16.2"/><path d="M48.25 7.3 A6.2 6.2 0 1 0 47.9 15.6 C48.9 14.6 50.4 9.8 51.4 8.8"/><circle cx="54.5" cy="11.9" r="4.35"/><path d="M62 16.2 V7.5 H65.6 a2.3 2.3 0 0 1 0 4.6 H62 M65.6 12.1 L69 16.2"/><path d="M79.4 7.5 H72.6 V16.2 H79.4 M72.6 11.85 H78.8"/></g><circle cx="81.6" cy="7.2" r="0.5" fill="#7c7d7e"/></svg>
<div class="a" style="left:281px;top:41px;width:143px;height:27px;background:#29a251;"></div>
<div class="a" style="left:399.6px;top:41px;width:1px;height:27px;background:#41b567;"></div>
<svg style="left:281px;top:41px;" width="20" height="27" viewBox="0 0 20 27"><path d="M7 13.9 l3.7 3.6 l8.3-8.6" fill="none" stroke="#fff" stroke-width="1.3"/></svg>
<div class="t" style="left:308.8px;top:49.03px;font-size:10.6px;color:#ffffff;transform:scaleX(0.923);transform-origin:0 0">SAVE &amp; PUBLISH</div>
<svg style="left:400px;top:41px;" width="24" height="27" viewBox="0 0 24 27"><path d="M8.2 10.8 h8.9 l-4.45 5z" fill="#fff"/></svg>
<div class="a" style="left:430.2px;top:41px;width:89px;height:26.5px;background:#45484b;"></div>
<svg style="left:430px;top:41px;" width="28" height="27" viewBox="0 0 28 27"><circle cx="14.2" cy="12.8" r="7.1" fill="none" stroke="#fff" stroke-width="1.4"/><path d="M9.2 17.8 l10-10" stroke="#fff" stroke-width="1.4"/></svg>
<div class="t" style="left:459px;top:48.89px;font-size:11px;color:#e4e4e4;">Unpublish</div>
<div class="a" style="left:531px;top:41px;width:26.5px;height:26.5px;background:#45484b;"></div>
<svg style="left:531px;top:41px;" width="27" height="27" viewBox="0 0 27 27"><path d="M7.4 7.7 h10.8" stroke="#fff" stroke-width="1.4"/><path d="M10.2 6.8 h5.2" stroke="#fff" stroke-width="1.2"/><path d="M8.6 8.6 v10.2 a1.2 1.2 0 0 0 1.2 1.2 h6 a1.2 1.2 0 0 0 1.2-1.2 v-10.2" fill="none" stroke="#fff" stroke-width="1.5"/></svg>
<div class="a" style="left:563.3px;top:41px;width:27px;height:26.5px;background:#45484b;"></div>
<svg style="left:563px;top:41px;" width="27" height="27" viewBox="0 0 27 27"><g transform="translate(7.3 19.2) rotate(-44.6)"><path d="M0.3 0 L2.4 -1.55 H13.2 V1.55 H2.4z" fill="none" stroke="#fff" stroke-width="1.3" stroke-linejoin="round"/><rect x="14.4" y="-2.2" width="3.2" height="4.4" fill="#fff"/></g></svg>
<div class="a" style="left:596px;top:41px;width:52px;height:26.5px;background:#45484b;"></div>
<div class="a" style="left:623.3px;top:41px;width:1px;height:26.5px;background:#3d4043;"></div>
<svg style="left:596px;top:41px;" width="27" height="27" viewBox="0 0 27 27"><path d="M17.8 9.2 a5.6 5.6 0 1 0 1.2 4.6" fill="none" stroke="#fff" stroke-width="1.5"/><path d="M19.6 6.4 v4.6 h-4.6z" fill="#fff"/></svg>
<svg style="left:624px;top:41px;" width="24" height="27" viewBox="0 0 24 27"><path d="M7.8 10.8 h9.4 l-4.7 5.2z" fill="#fff"/></svg>
<div class="a" style="left:654px;top:41px;width:26.5px;height:26.5px;background:#45484b;"></div>
<svg style="left:654px;top:41px;" width="27" height="27" viewBox="0 0 27 27"><circle cx="13.4" cy="13" r="5.75" fill="none" stroke="#fff" stroke-width="1.5"/><circle cx="13.4" cy="13" r="2.95" fill="#fff"/><path d="M13.4 4.5 v2.4 M13.4 19.1 v2.4 M4.9 13 h2.4 M19.5 13 h2.4" stroke="#fff" stroke-width="1.5" stroke-linecap="round"/></svg>
<div class="a" style="left:686.1px;top:41px;width:52.7px;height:26.5px;background:#45484b;"></div>
<div class="a" style="left:714.4px;top:41px;width:1px;height:26.5px;background:#3d4043;"></div>
<svg style="left:686px;top:41px;" width="28" height="27" viewBox="0 0 28 27"><circle cx="14" cy="12.9" r="7" fill="none" stroke="#fff" stroke-width="1.4"/><rect x="13.1" y="11.4" width="1.8" height="5.2" fill="#fff"/><circle cx="14" cy="9.4" r="1" fill="#fff"/></svg>
<svg style="left:715px;top:41px;" width="24" height="27" viewBox="0 0 24 27"><path d="M7.8 10.8 h9.4 l-4.7 5.2z" fill="#fff"/></svg>
<div class="a" style="left:750.2px;top:41px;width:26.6px;height:26.5px;background:#45484b;"></div>
<svg style="left:750px;top:41px;" width="27" height="27" viewBox="0 0 27 27"><path d="M5.6 13 c2-3.3 4.6-4.9 7.8-4.9 s5.8 1.6 7.8 4.9 c-2 3.3-4.6 4.9-7.8 4.9 s-5.8-1.6-7.8-4.9z" fill="none" stroke="#fff" stroke-width="1.5"/><circle cx="13.4" cy="13" r="2.9" fill="none" stroke="#fff" stroke-width="1.5"/></svg>
<div class="t" style="left:792px;top:49.26px;font-size:10.8px;color:#e2e2e2;transform:scaleX(0.9);transform-origin:0 0">ID 263</div>
<div class="t" style="left:838.8px;top:49.26px;font-size:10.8px;color:#e2e2e2;transform:scaleX(0.87);transform-origin:0 0">Car</div>
<div class="a" style="left:863px;top:43px;width:68px;height:21.5px;background:#45484b;"></div>
<svg style="left:868px;top:46px;" width="14" height="16" viewBox="0 0 14 16"><path d="M0.8 0.4 h8.6 l3.6 3.6 v11 h-12.2z" fill="#dc2a1f"/><path d="M9.4 0.4 v3.6 h3.6z" fill="#b81d14"/><path d="M6.2 8.9 L5.8 4 M6.2 8.9 L2.3 13 M6.2 8.9 L10.8 10.8" fill="none" stroke="#fff" stroke-width="1.3" stroke-linecap="round"/></svg>
<div class="t" style="left:889.3px;top:49.73px;font-size:10px;color:#dedede;">print-pdf</div>
<div class="a" style="left:281.2px;top:74.7px;width:54.8px;height:26.3px;background:#f6f6f6;"></div>
<svg style="left:281px;top:75px;" width="28" height="26" viewBox="0 0 28 26"><g transform="translate(10.6 18) rotate(-41.4)"><path d="M0.3 0 L2.4 -1.6 H13 V1.6 H2.4z" fill="none" stroke="#111" stroke-width="1.7" stroke-linejoin="round"/><rect x="14.2" y="-2.4" width="3.3" height="4.8" fill="#111"/></g></svg>
<div class="t" style="left:311.4px;top:83.33px;font-size:10px;color:#3a3a3a;">Edit</div>
<svg style="left:344px;top:74px;" width="28" height="26" viewBox="0 0 28 26"><path d="M6.5 18.2 v-10.6 h14.2 M4.2 18.3 h8.8" fill="none" stroke="#fff" stroke-width="1.5"/><rect x="15.2" y="11.2" width="6.2" height="7" fill="none" stroke="#fff" stroke-width="1.5"/></svg>
<div class="t" style="left:370.8px;top:83.33px;font-size:10px;color:#c9c9c9;">Preview</div>
<div class="a" style="left:418.5px;top:74px;width:1px;height:26.5px;background:#4d5053;"></div>
<svg style="left:424px;top:74px;" width="24" height="26" viewBox="0 0 24 26"><path d="M4.2 8.9 h8.4 M14 8.9 h4 M4.2 13.2 h2 M9.4 13.2 h8.6 M4.2 17.8 h5.4 M12.8 17.8 h5.2" stroke="#fff" stroke-width="1.6"/><path d="M14 6.6 v4.6 M7.9 11 v4.5 M11.3 15.5 v4.6" stroke="#fff" stroke-width="1.6"/></svg>
<div class="t" style="left:449px;top:83.25px;font-size:10.1px;color:#c9c9c9;">Properties</div>
<div class="a" style="left:507.4px;top:74px;width:1px;height:26.5px;background:#4d5053;"></div>
<svg style="left:512px;top:74px;" width="24" height="26" viewBox="0 0 24 26"><rect x="5.9" y="7" width="5" height="5" fill="none" stroke="#fff" stroke-width="1.6"/><rect x="5.9" y="14.6" width="5" height="5" fill="none" stroke="#fff" stroke-width="1.6"/><rect x="13.8" y="14.6" width="5" height="5" fill="none" stroke="#fff" stroke-width="1.6"/><path d="M15.5 6.1 l3.4 3.4 l-3.4 3.4 l-3.4-3.4z" fill="none" stroke="#fff" stroke-width="1.6"/></svg>
<div class="t" style="left:537.5px;top:83.33px;font-size:10px;color:#c9c9c9;">Versions</div>
<div class="a" style="left:588px;top:74px;width:1px;height:26.5px;background:#4d5053;"></div>
<div class="a" style="left:625px;top:74px;width:1px;height:26.5px;background:#4d5053;"></div>
<div class="a" style="left:662px;top:74px;width:1px;height:26.5px;background:#4d5053;"></div>
<div class="a" style="left:699px;top:74px;width:1px;height:26.5px;background:#4d5053;"></div>
<div class="a" style="left:736px;top:74px;width:1px;height:26.5px;background:#4d5053;"></div>
<svg style="left:592px;top:74px;" width="24" height="26" viewBox="0 0 24 26"><rect x="6.8" y="6.2" width="12.4" height="13.4" rx="1.2" fill="none" stroke="#fff" stroke-width="1.5"/><path d="M6.8 9 h12.4 M9.6 4.6 v2.4 M16.4 4.6 v2.4" stroke="#fff" stroke-width="1.5"/><path d="M10.2 14.2 l1.8 1.8 l3.4-3.6" fill="none" stroke="#fff" stroke-width="1.4"/></svg>
<svg style="left:629px;top:74px;" width="24" height="26" viewBox="0 0 24 26"><path d="M7.8 6.6 h9.6 v13.2 l-4.8-3.2 l-4.8 3.2z" fill="none" stroke="#fff" stroke-width="1.6" stroke-linejoin="round"/></svg>
<svg style="left:666px;top:74px;" width="24" height="26" viewBox="0 0 24 26"><rect x="7.2" y="6.8" width="12.4" height="12.8" rx="1.2" fill="none" stroke="#fff" stroke-width="1.5"/><path d="M11 6 h4.8 v1.6 h-4.8z" fill="#fff"/><circle cx="13.4" cy="5.6" r="1.1" fill="#fff"/><path d="M12.4 11.5 h4.8 M12.4 14.3 h4.8" stroke="#fff" stroke-width="1.2"/><circle cx="10.1" cy="11.5" r="0.7" fill="#fff"/><circle cx="10.1" cy="14.3" r="0.7" fill="#fff"/></svg>
<svg style="left:703px;top:74px;" width="26" height="26" viewBox="0 0 26 26"><path d="M6.2 7.4 a1 1 0 0 1 1-1 h5 l8 8 a1 1 0 0 1 0 1.4 l-4.8 4.8 a1 1 0 0 1-1.4 0 l-7.8-7.8z" fill="none" stroke="#fff" stroke-width="1.5" stroke-linejoin="round"/><rect x="8.2" y="8.4" width="1.6" height="1.6" fill="#fff"/></svg>
<svg style="left:740px;top:74px;" width="26" height="26" viewBox="0 0 26 26"><rect x="5.6" y="7.6" width="16" height="11.6" rx="1.8" fill="none" stroke="#fff" stroke-width="1.5"/><path d="M13.2 7.6 v11.6" stroke="#fff" stroke-width="1.5"/><path d="M15.2 11.2 h4.2 M15.2 13.4 h4.2 M15.2 15.6 h4.2" stroke="#fff" stroke-width="0.9"/></svg>
<div class="a" style="left:282px;top:138.5px;width:843px;height:1px;background:#d6d6d6;"></div>
<div class="a" style="left:555.8px;top:116px;width:72.4px;height:23.5px;background:#f6f6f6;border:1px solid #d6d6d6;border-bottom:none"></div>
<div class="t" style="left:296.4px;top:123.53px;font-size:10px;color:#5a5a5a;">Basedata</div>
<div class="t" style="left:357.8px;top:123.53px;font-size:10px;color:#5a5a5a;">Media</div>
<div class="t" style="left:405.7px;top:123.53px;font-size:10px;color:#5a5a5a;">Attributes</div>
<div class="t" style="left:469.9px;top:123.45px;font-size:10.1px;color:#5a5a5a;">Sale Information</div>
<div class="t" style="left:564.6px;top:123.53px;font-size:10px;color:#454545;">Data Quality</div>
<div class="t" style="left:639.8px;top:123.53px;font-size:10px;color:#5a5a5a;">System Data</div>
<div class="a" style="left:297px;top:157px;width:813.3px;height:151.6px;background:#d3ebf0;border-radius:3px"></div>
<div class="t" style="left:312.2px;top:164.05px;font-size:15.3px;color:#1b5768;font-weight:bold;">Data Quality Summary</div>
<div class="a" style="left:312.2px;top:190px;width:370.8px;height:21.7px;background:#ffffff;"></div>
<div class="a" style="left:312.2px;top:211.7px;width:370.8px;height:21.9px;background:#fdfbec;"></div>
<div class="a" style="left:312.2px;top:233.6px;width:370.8px;height:65.4px;background:#dff3dd;"></div>
<div class="t" style="left:317.4px;top:196.03px;font-size:10px;color:#111;font-weight:bold;">Elements</div>
<div class="t" style="left:502.1px;top:196.03px;font-size:10px;color:#111;font-weight:bold;">State</div>
<div class="t" style="left:317.4px;top:218.44px;font-size:10px;color:#333;">Texts Available</div>
<div class="t" style="left:502.1px;top:218.44px;font-size:10px;color:#333;">partly completed</div>
<div class="t" style="left:317.4px;top:240.13px;font-size:10px;color:#333;">Attributes Available</div>
<div class="t" style="left:502.1px;top:240.13px;font-size:10px;color:#333;">completed</div>
<div class="t" style="left:317.4px;top:262.04px;font-size:10px;color:#333;">Sale Information Available</div>
<div class="t" style="left:502.1px;top:262.04px;font-size:10px;color:#333;">completed</div>
<div class="t" style="left:317.4px;top:283.94px;font-size:10px;color:#333;">Images Available</div>
<div class="t" style="left:502.1px;top:283.94px;font-size:10px;color:#333;">completed</div>
<div class="a" style="left:297.2px;top:350px;width:813.2px;height:1px;background:#d6d6d6;"></div>
<div class="a" style="left:303.3px;top:324.2px;width:70.2px;height:26.3px;background:#f6f6f6;border:1px solid #d6d6d6;border-bottom:none"></div>
<svg style="left:311px;top:331.5px;" width="18" height="14" viewBox="0 0 18 14"><defs><clipPath id="ukc"><rect width="18" height="13.7"/></clipPath></defs><g clip-path="url(#ukc)"><rect width="18" height="13.7" fill="#1b2a7a"/><path d="M0 0 L18 13.7 M18 0 L0 13.7" stroke="#fff" stroke-width="2.8"/><path d="M0 0 L18 13.7 M18 0 L0 13.7" stroke="#e32b34" stroke-width="1"/><path d="M9 0 v13.7 M0 6.85 h18" stroke="#fff" stroke-width="4"/><path d="M9 0 v13.7 M0 6.85 h18" stroke="#de1a24" stroke-width="2.4"/></g></svg>
<div class="t" style="left:333.4px;top:333.44px;font-size:10px;color:#555;">English</div>
<svg style="left:385px;top:331.5px;" width="18" height="14" viewBox="0 0 18 14"><rect width="18" height="4.6" fill="#111"/><rect y="4.6" width="18" height="4.6" fill="#dd1d1d"/><rect y="9.2" width="18" height="4.5" fill="#fcc600"/></svg>
<div class="t" style="left:407.9px;top:333.44px;font-size:10px;color:#555;">German</div>
<svg style="left:464px;top:331.5px;" width="18" height="14" viewBox="0 0 18 14"><rect width="6" height="13.7" fill="#1b2b82"/><rect x="6" width="6" height="13.7" fill="#ffffff"/><rect x="12" width="6" height="13.7" fill="#ee1f35"/></svg>
<div class="t" style="left:486.2px;top:333.44px;font-size:10px;color:#555;">French</div>
<svg style="left:304.3px;top:360px;" width="6" height="5" viewBox="0 0 6 5"><path d="M0 0 h5.8 l-5.8 4.8z" fill="#3cb043"/></svg>
<svg style="left:306.9px;top:368.5px;" width="13" height="13" viewBox="0 0 13 13"><rect x="0" y="0" width="12.7" height="12.5" rx="1.6" fill="#a3a3a3"/><path d="M6.35 6.25 h6.35 v4.65 a1.6 1.6 0 0 1-1.6 1.6 h-4.75z" fill="#4cb35a"/><path d="M1.8 3.3 h3 M8 3.3 h3 M9.5 1.8 v3 M2.2 8.4 l2 2 M4.2 8.4 l-2 2 M8 8.8 h2.8 M8 10.2 h2.8" stroke="#e8e8e8" stroke-width="0.9"/></svg>
<div class="t" style="left:322px;top:369.44px;font-size:10px;color:#a6a6a6;">Texts Available:</div>
<div class="a" style="left:464.2px;top:360px;width:126.6px;height:23.8px;background:#e5e5e5;"></div>
<div class="t" style="left:472px;top:369.18px;font-size:10.3px;color:#a2a2a2;">completed</div>
<svg style="left:306.9px;top:422.70000000000005px;" width="13" height="13" viewBox="0 0 13 13"><rect x="0" y="0" width="12.7" height="12.5" rx="1.6" fill="#a3a3a3"/><path d="M6.35 6.25 h6.35 v4.65 a1.6 1.6 0 0 1-1.6 1.6 h-4.75z" fill="#4cb35a"/><path d="M1.8 3.3 h3 M8 3.3 h3 M9.5 1.8 v3 M2.2 8.4 l2 2 M4.2 8.4 l-2 2 M8 8.8 h2.8 M8 10.2 h2.8" stroke="#e8e8e8" stroke-width="0.9"/></svg>
<div class="t" style="left:322px;top:423.64px;font-size:10px;color:#858585;">Attributes Available:</div>
<div class="a" style="left:464.2px;top:413.4px;width:126.6px;height:23.8px;background:#ffffff;border:1px solid #e4e4e4"></div>
<div class="t" style="left:472px;top:423.38px;font-size:10.3px;color:#858585;">completed</div>
<svg style="left:306.9px;top:453.1px;" width="13" height="13" viewBox="0 0 13 13"><rect x="0" y="0" width="12.7" height="12.5" rx="1.6" fill="#a3a3a3"/><path d="M6.35 6.25 h6.35 v4.65 a1.6 1.6 0 0 1-1.6 1.6 h-4.75z" fill="#4cb35a"/><path d="M1.8 3.3 h3 M8 3.3 h3 M9.5 1.8 v3 M2.2 8.4 l2 2 M4.2 8.4 l-2 2 M8 8.8 h2.8 M8 10.2 h2.8" stroke="#e8e8e8" stroke-width="0.9"/></svg>
<div class="t" style="left:322px;top:454.04px;font-size:10px;color:#858585;">Sale Information Available:</div>
<div class="a" style="left:464.2px;top:445.3px;width:126.6px;height:23.8px;background:#ffffff;border:1px solid #e4e4e4"></div>
<div class="t" style="left:472px;top:453.78px;font-size:10.3px;color:#858585;">completed</div>
<svg style="left:306.9px;top:484.70000000000005px;" width="13" height="13" viewBox="0 0 13 13"><rect x="0" y="0" width="12.7" height="12.5" rx="1.6" fill="#a3a3a3"/><path d="M6.35 6.25 h6.35 v4.65 a1.6 1.6 0 0 1-1.6 1.6 h-4.75z" fill="#4cb35a"/><path d="M1.8 3.3 h3 M8 3.3 h3 M9.5 1.8 v3 M2.2 8.4 l2 2 M4.2 8.4 l-2 2 M8 8.8 h2.8 M8 10.2 h2.8" stroke="#e8e8e8" stroke-width="0.9"/></svg>
<div class="t" style="left:322px;top:485.64px;font-size:10px;color:#858585;">Images Available:</div>
<div class="a" style="left:464.2px;top:476px;width:126.6px;height:23.8px;background:#ffffff;border:1px solid #e4e4e4"></div>
<div class="t" style="left:472px;top:485.38px;font-size:10.3px;color:#858585;">completed</div>
<svg style="left:950px;top:562px;" width="12" height="16" viewBox="0 0 12 16"><path d="M0.7 0.7 v9.6 l2.3-2.2 l1.6 3.3 l1.3-0.6 l-1.6-3.2 h3.3z" fill="#fff" stroke="#444" stroke-width="0.8" stroke-linejoin="round"/></svg>
<div class="a" style="left:0px;top:585.9px;width:1140px;height:0.8px;background:#ffffff;"></div>
<div class="a" style="left:0px;top:586.7px;width:1140px;height:1.3px;background:#4f5154;"></div>
<div class="a" style="left:1113.3px;top:561.3px;width:26.7px;height:26.7px;background:#222222;border-top-left-radius:3px"></div>
<svg style="left:1113px;top:561px;" width="27" height="27" viewBox="0 0 27 27"><circle cx="14.1" cy="13.5" r="8.4" fill="#a9a9a9"/><text x="13.6" y="17.6" font-family="Liberation Serif" font-style="italic" font-weight="bold" font-size="11" fill="#222" text-anchor="middle">sf</text></svg>
<div class="a" style="left:1133px;top:101px;width:7px;height:460px;background:#0c0f12;"></div>
</body></html>
